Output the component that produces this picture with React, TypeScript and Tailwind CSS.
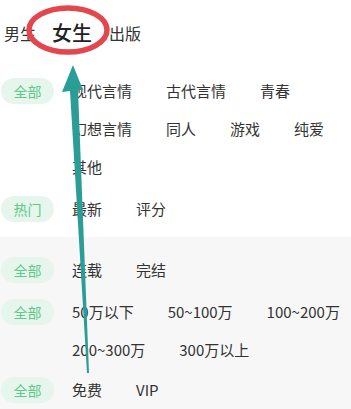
import React from "react";

const Pill = ({ label }: { label: string }) => (
    <div className="flex h-[38px] w-[72px] shrink-0 items-center">
        <span className="ml-[1px] flex h-[26px] w-[53px] items-center justify-center rounded-full bg-[#e6f6ec] text-[14px] text-[#5cc98a]">
            {label}
        </span>
    </div>
);

const Group = ({ label, items, className = "" }: { label: string; items: string[]; className?: string }) => (
    <div className={"flex " + className}>
        {label ? <Pill label={label} /> : <div className="w-[72px] shrink-0" />}
        <div className="flex flex-1 flex-wrap gap-x-[34px]">
            {items.map((item, i) => (
                <span key={i} className="flex h-[38px] items-center text-[15px] text-[#333]">
                    {item}
                </span>
            ))}
        </div>
    </div>
);

export default function App() {
    return (
        <div
            className="relative h-[409px] w-[351px] overflow-hidden bg-white"
            style={{ fontFamily: '"Noto Sans CJK SC", "Noto Sans", sans-serif' }}
        >
            {/* tabs */}
            <div className="flex h-[72px] items-start pt-[20px]">
                <span className="ml-[4px] flex h-[26px] items-center text-[16px] text-[#333]">男生</span>
                <span className="ml-[16px] flex h-[26px] items-center text-[20px] font-medium text-[#222]">女生</span>
                <span className="ml-[17px] flex h-[26px] items-center text-[16px] text-[#333]">出版</span>
            </div>

            {/* white section */}
            <div className="pb-[9px]">
                <Group label="全部" items={["现代言情", "古代言情", "青春", "幻想言情", "同人", "游戏", "纯爱", "其他"]} />
                <Group label="热门" items={["最新", "评分"]} className="mt-[4px]" />
            </div>

            {/* gray section */}
            <div className="bg-[#f7f7f7] pt-[14px] pb-[20px]">
                <Group label="全部" items={["连载", "完结"]} />
                <Group label="全部" items={["50万以下", "50~100万", "100~200万", "200~300万", "300万以上"]} className="mt-[4px]" />
                <Group label="全部" items={["免费", "VIP"]} className="mt-[2px]" />
            </div>

            {/* annotation overlay */}
            <svg className="pointer-events-none absolute left-0 top-0" width="351" height="409" viewBox="0 0 351 409">
                <ellipse cx="68" cy="30" rx="39" ry="22" fill="none" stroke="#e3474d" strokeWidth="5.5" />
                <polygon
                    points="73,65 83,90 78,90 89,373 87,373 70,91 62,92"
                    fill="#2a9d97"
                />
            </svg>
        </div>
    );
}
